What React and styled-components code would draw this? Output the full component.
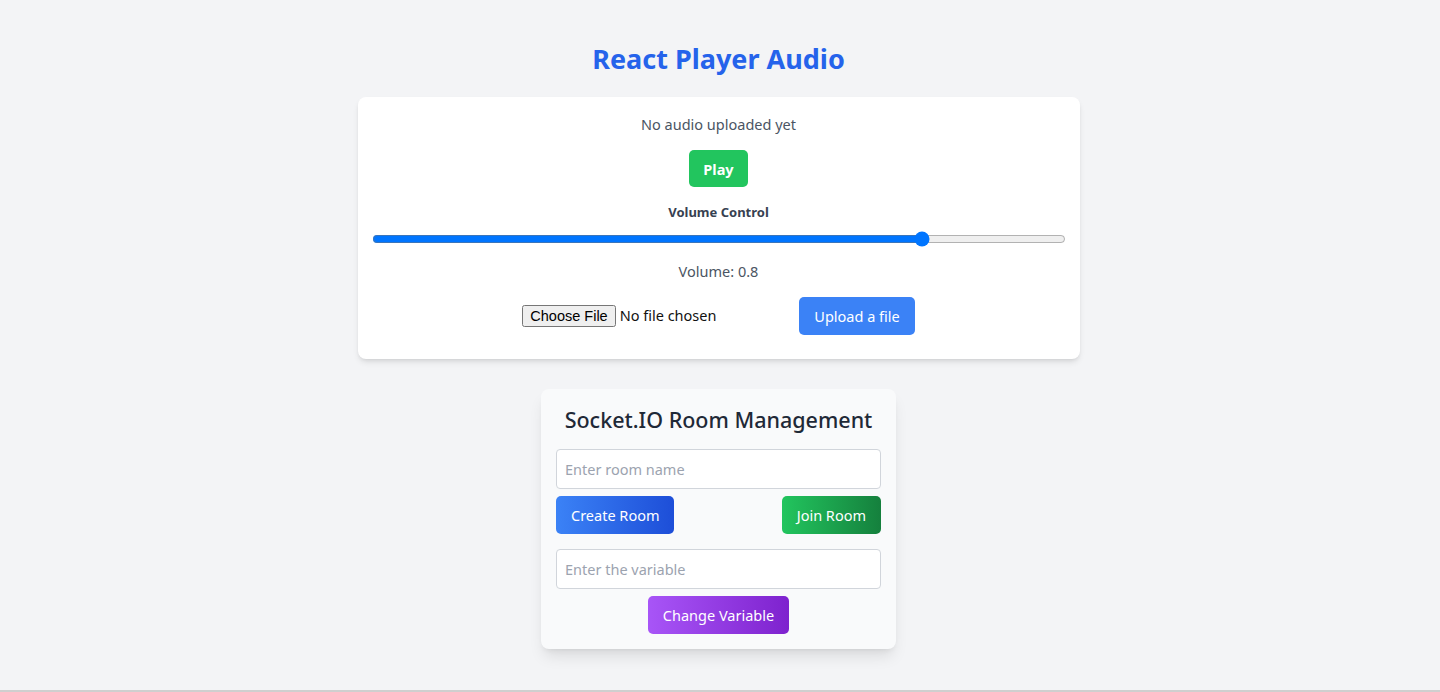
import { useState } from "react";
import styled, { createGlobalStyle } from "styled-components";

const GlobalStyle = createGlobalStyle`
  * { box-sizing: border-box; }
  body {
    margin: 0;
    background: #f3f4f6;
    font-family: "Noto Sans", "Open Sans", sans-serif;
  }
`;

const Page = styled.div`
  min-height: 692px;
  border-bottom: 2px solid #cfcfcf;
  padding: 38px 3px 0 0;
  display: flex;
  flex-direction: column;
  align-items: center;
`;

const Title = styled.h1`
  margin: 0 0 17px;
  font-size: 27px;
  line-height: 42px;
  font-weight: 700;
  color: #2563eb;
`;

const PlayerCard = styled.div`
  width: 722px;
  background: #ffffff;
  border-radius: 8px;
  box-shadow: 0 4px 6px -1px rgba(0, 0, 0, 0.1), 0 2px 4px -2px rgba(0, 0, 0, 0.1);
  padding: 15px 14px 24px;
  display: flex;
  flex-direction: column;
  align-items: center;
`;

const Status = styled.p`
  margin: 0;
  font-size: 14.5px;
  line-height: 24px;
  color: #4b5563;
`;

const Button = styled.button`
  border: none;
  border-radius: 5px;
  padding: 0 15px;
  height: 38px;
  font-family: inherit;
  font-size: 14.5px;
  font-weight: ${(p) => (p.bold ? 700 : 400)};
  color: #ffffff;
  background: ${(p) => p.bg};
  cursor: pointer;
`;

const PlayButton = styled(Button)`
  margin-top: 14px;
  height: 37px;
  padding: 0 14px;
`;

const VolumeLabel = styled.label`
  margin-top: 16px;
  font-size: 13px;
  line-height: 18px;
  font-weight: 700;
  color: #374151;
`;

const Range = styled.input`
  width: 100%;
  margin: 10px 0 0;
`;

const VolumeText = styled.p`
  margin: 12px 0 0;
  font-size: 14.5px;
  line-height: 24px;
  color: #4b5563;
`;

const UploadRow = styled.div`
  margin-top: 14px;
  display: flex;
  align-items: center;
  gap: 24px;
`;

const FileInput = styled.input`
  width: 253px;
  font-family: inherit;
  font-size: 14.5px;
  color: #111;
`;

const RoomCard = styled.div`
  margin-top: 30px;
  width: 355px;
  background: #f9fafb;
  border-radius: 8px;
  box-shadow: 0 10px 15px -3px rgba(0, 0, 0, 0.1), 0 4px 6px -4px rgba(0, 0, 0, 0.1);
  padding: 15px;
  display: flex;
  flex-direction: column;
`;

const RoomTitle = styled.h2`
  margin: 0 0 13px;
  text-align: center;
  font-size: 21.5px;
  line-height: 32px;
  font-weight: 500;
  color: #1f2937;
`;

const TextInput = styled.input`
  width: 100%;
  height: 40px;
  border: 1px solid #d1d5db;
  border-radius: 4px;
  padding: 0 8px;
  background: #ffffff;
  font-family: inherit;
  font-size: 14.5px;
  color: #111827;
  &::placeholder { color: #9ca3af; }
`;

const ButtonRow = styled.div`
  margin: 7px 0 15px;
  display: flex;
  justify-content: space-between;
`;

const Centered = styled.div`
  margin-top: 7px;
  display: flex;
  justify-content: center;
`;

export default function App() {
  const [volume, setVolume] = useState(0.8);

  return (
    <Page>
      <GlobalStyle />
      <Title>React Player Audio</Title>
      <PlayerCard>
        <Status>No audio uploaded yet</Status>
        <PlayButton bold bg="#22c55e">Play</PlayButton>
        <VolumeLabel>Volume Control</VolumeLabel>
        <Range
          type="range"
          min="0"
          max="1"
          step="0.1"
          value={volume}
          onChange={(e) => setVolume(Number(e.target.value))}
        />
        <VolumeText>Volume: {volume}</VolumeText>
        <UploadRow>
          <FileInput type="file" />
          <Button bg="#3b82f6">Upload a file</Button>
        </UploadRow>
      </PlayerCard>

      <RoomCard>
        <RoomTitle>Socket.IO Room Management</RoomTitle>
        <TextInput placeholder="Enter room name" />
        <ButtonRow>
          <Button bg="linear-gradient(to right, #3b82f6, #1d4ed8)">Create Room</Button>
          <Button bg="linear-gradient(to right, #22c55e, #15803d)">Join Room</Button>
        </ButtonRow>
        <TextInput placeholder="Enter the variable" />
        <Centered>
          <Button bg="linear-gradient(to right, #a855f7, #7e22ce)">Change Variable</Button>
        </Centered>
      </RoomCard>
    </Page>
  );
}
